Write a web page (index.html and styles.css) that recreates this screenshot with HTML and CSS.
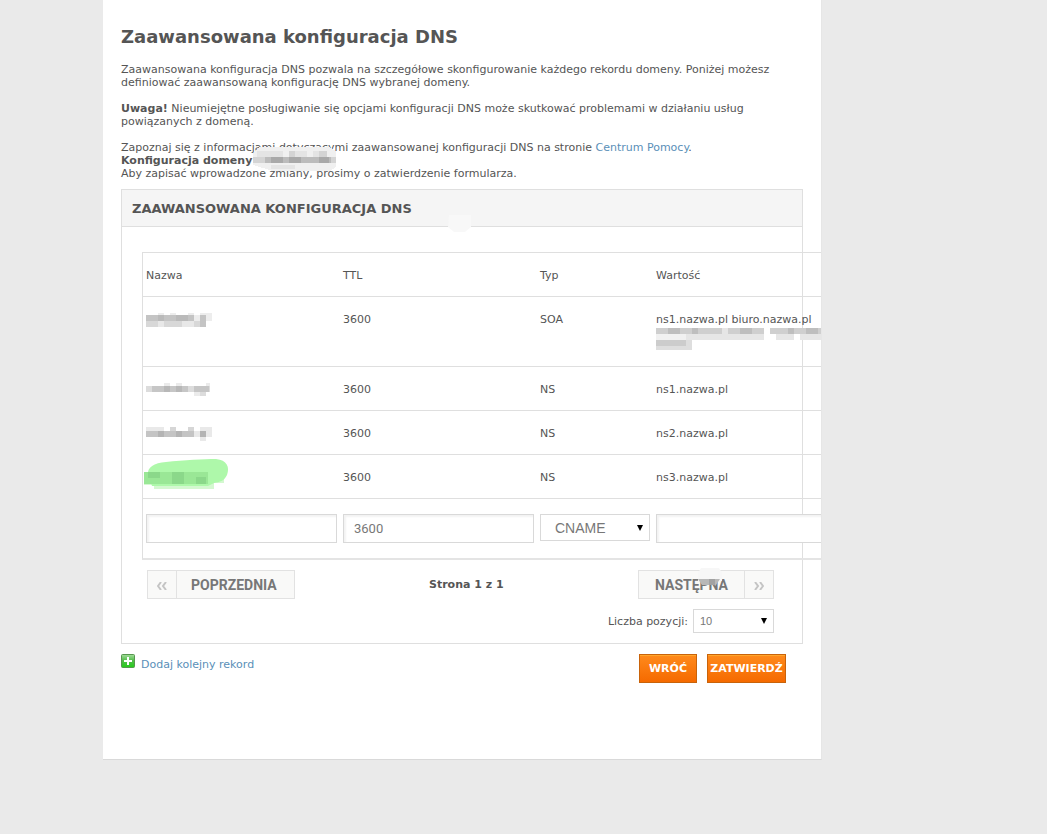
FILE: index.html
```html
<!DOCTYPE html>
<html lang="pl">
<head>
    <meta charset="UTF-8">
    <meta name="viewport" content="width=device-width, initial-scale=1.0">
    <title>Zaawansowana konfiguracja DNS</title>
    <link rel="stylesheet" href="styles.css">
</head>
<body>
    <main class="page">
        <h1>Zaawansowana konfiguracja DNS</h1>

        <p>Zaawansowana konfiguracja DNS pozwala na szczegółowe skonfigurowanie każdego rekordu domeny. Poniżej możesz definiować zaawansowaną konfigurację DNS wybranej domeny.</p>
        <p><strong>Uwaga!</strong> Nieumiejętne posługiwanie się opcjami konfiguracji DNS może skutkować problemami w działaniu usług powiązanych z domeną.</p>
        <p class="last">
            Zapoznaj się z informacjami dotyczącymi zaawansowanej konfiguracji DNS na stronie <a href="#">Centrum Pomocy</a>.<br>
            <strong class="domain">Konfiguracja domeny
                <svg class="mask mask-domain" width="84" height="26" viewBox="0 0 84 26" shape-rendering="crispEdges">
                    <path fill="#f0f0f0" d="M6 0h70l7 4v16l-6 4H20L0 18V6z"/>
                    <path fill="#e4e4e4" d="M4 4h26v6H4zM42 4h12v6H42zM60 4h6v6h-6zM18 18h24v4H18z"/>
                    <path fill="#d4d4d4" d="M36 4h6v6h-6zM66 4h8v6h-8zM0 10h83v6H0z"/>
                    <path fill="#bcbcbc" d="M12 10h66v6H12z"/>
                    <path fill="#a9a9a9" d="M18 10h12v6H18zM36 10h12v6H36zM66 10h10v6H66z"/>
                </svg>
            </strong><br>
            Aby zapisać wprowadzone zmiany, prosimy o zatwierdzenie formularza.
        </p>

        <form>
            <section class="panel">
                <h2>ZAAWANSOWANA KONFIGURACJA DNS
                    <svg class="mask mask-title" width="24" height="17" viewBox="0 0 24 17">
                        <path fill="#f8f8f8" d="M1 0h22v12l-6 5H6l-6-5z"/>
                    </svg>
                </h2>
                <div class="panel-body">
                    <table class="records">
                        <thead>
                            <tr>
                                <th class="col-name">Nazwa</th>
                                <th class="col-ttl">TTL</th>
                                <th class="col-type">Typ</th>
                                <th>Wartość</th>
                            </tr>
                        </thead>
                        <tbody>
                            <tr class="soa">
                                <td>
                                    <svg class="mosaic" width="66" height="14" viewBox="0 0 66 14" shape-rendering="crispEdges">
                                        <path fill="#ededed" d="M12 0h6v2h-6zM24 0h6v2h-6zM42 0h6v2h-6zM54 0h12v8H54zM48 2h6v6h-6z"/>
                                        <path fill="#d8d8d8" d="M0 8h12v6H0zM18 8h30v6H18zM48 8h6v6h-6z"/>
                                        <path fill="#e8e8e8" d="M12 8h6v6h-6zM36 8h12v6H36z"/>
                                        <path fill="#c4c4c4" d="M0 2h48v6H0zM54 2h6v12h-6z"/>
                                        <path fill="#bababa" d="M12 2h6v6h-6zM30 2h12v6H30z"/>
                                    </svg>
                                </td>
                                <td>3600</td>
                                <td>SOA</td>
                                <td>ns1.nazwa.pl biuro.nazwa.pl
                                    <svg class="mosaic" width="174" height="24" viewBox="0 0 174 24" shape-rendering="crispEdges">
                                        <path fill="#cfcfcf" d="M0 2h108v6H0zM114 2h60v6h-60z"/>
                                        <path fill="#bebebe" d="M12 2h12v6H12zM36 2h6v6h-6zM84 2h12v6H84zM132 2h6v6h-6zM150 2h12v6h-12z"/>
                                        <path fill="#e6e6e6" d="M30 8h78v6H30zM120 8h18v6h-18zM144 8h24v6h-24zM66 2h6v6h-6z"/>
                                        <path fill="#f1f1f1" d="M0 8h30v6H0z"/>
                                        <path fill="#cccccc" d="M0 14h30v6H0z"/>
                                        <path fill="#dedede" d="M0 20h30v4H0zM30 14h6v10h-6z"/>
                                    </svg>
                                </td>
                            </tr>
                            <tr>
                                <td>
                                    <svg class="mosaic" width="66" height="14" viewBox="0 0 66 14" shape-rendering="crispEdges">
                                        <path fill="#ebebeb" d="M18 0h6v3h-6zM30 0h6v3h-6zM60 0h4v3h-4zM48 9h6v4h-6z"/>
                                        <path fill="#dcdcdc" d="M0 3h64v6H0zM54 9h6v4h-6z"/>
                                        <path fill="#c6c6c6" d="M6 3h36v6H6zM48 3h15v6H48z"/>
                                        <path fill="#b8b8b8" d="M18 3h6v6h-6zM30 3h6v6h-6z"/>
                                    </svg>
                                </td>
                                <td>3600</td>
                                <td>NS</td>
                                <td>ns1.nazwa.pl</td>
                            </tr>
                            <tr>
                                <td>
                                    <svg class="mosaic" width="66" height="14" viewBox="0 0 66 14" shape-rendering="crispEdges">
                                        <path fill="#e9e9e9" d="M0 0h18v4H0zM54 0h12v10H54zM48 4h6v6h-6zM54 10h6v4h-6z"/>
                                        <path fill="#d6d6d6" d="M24 0h6v4h-6zM42 0h6v4h-6z"/>
                                        <path fill="#c4c4c4" d="M0 4h48v6H0z"/>
                                        <path fill="#b4b4b4" d="M12 4h6v6h-6zM30 4h6v6h-6zM54 4h6v6h-6z"/>
                                    </svg>
                                </td>
                                <td>3600</td>
                                <td>NS</td>
                                <td>ns2.nazwa.pl</td>
                            </tr>
                            <tr>
                                <td>
                                    <svg class="mosaic marked" width="86" height="32" viewBox="0 0 86 32">
                                        <path fill="#d4f8d0" d="M0 14h80v10H70v6H10v-4H0z"/>
                                        <path fill="#aef8aa" d="M4 16C3 8 10 4 22 3C40 1 60 0 72 0C83 1 86 8 83 16C80 22 76 23 70 24L64 27H8z"/>
                                        <path fill="#9ae796" d="M0 13h64v12H0z"/>
                                        <path fill="#8bd88a" d="M28 13h12v12H28zM52 18h10v7H52zM4 13h12v6H4z"/>
                                    </svg>
                                </td>
                                <td>3600</td>
                                <td>NS</td>
                                <td>ns3.nazwa.pl</td>
                            </tr>
                            <tr class="edit">
                                <td><input type="text" aria-label="Nazwa"></td>
                                <td><input type="text" aria-label="TTL" value="3600"></td>
                                <td>
                                    <select class="type" aria-label="Typ">
                                        <option>CNAME</option>
                                        <option>A</option>
                                        <option>MX</option>
                                    </select>
                                </td>
                                <td><input type="text" aria-label="Wartość"></td>
                            </tr>
                        </tbody>
                    </table>

                    <div class="pager">
                        <button type="button" class="page-btn"><span class="arrow">
                            <svg width="10" height="8" viewBox="0 0 10 8"><path d="M4 0L1 4l3 4M9 0L6 4l3 4"/></svg>
                        </span><span class="label">POPRZEDNIA</span></button>
                        <strong>Strona 1 z 1</strong>
                        <button type="button" class="page-btn next"><span class="label">NASTĘPNA</span><span class="arrow">
                            <svg width="10" height="8" viewBox="0 0 10 8"><path d="M1 0l3 4-3 4M6 0l3 4-3 4"/></svg>
                        </span>
                            <svg class="mask mask-next" width="24" height="18" viewBox="0 0 24 18">
                                <path fill="#f7f7f7" d="M3 0h18l3 5v8H0V5z"/>
                                <path fill="#b8b8b8" d="M0 11h22l-4 6H4z"/>
                                <path fill="#a2a2a2" d="M11 11h6v6h-6z"/>
                            </svg>
                        </button>
                    </div>
                    <div class="per-page">
                        <label for="per-page">Liczba pozycji:</label>
                        <select id="per-page">
                            <option>10</option>
                            <option>20</option>
                            <option>50</option>
                        </select>
                    </div>
                </div>
            </section>

            <div class="actions">
                <a class="add" href="#">
                    <svg width="14" height="14" viewBox="0 0 14 14">
                        <defs>
                            <linearGradient id="green" x1="0" y1="0" x2="0" y2="1">
                                <stop offset="0" stop-color="#a3dd9c"/>
                                <stop offset="0.45" stop-color="#55bd4c"/>
                                <stop offset="1" stop-color="#22cd18"/>
                            </linearGradient>
                        </defs>
                        <rect x="0.5" y="0.5" width="13" height="13" rx="1" fill="url(#green)" stroke="#57964f"/>
                        <path d="M7 3v8M3 7h8" stroke="#fff" stroke-width="2"/>
                    </svg>
                    <span>Dodaj kolejny rekord</span>
                </a>
                <button type="button" class="btn">WRÓĆ</button>
                <button type="submit" class="btn confirm">ZATWIERDŹ</button>
            </div>
        </form>
    </main>
</body>
</html>
```
FILE: styles.css
```css
* {
    box-sizing: border-box;
}
body {
    margin: 0;
    background: #eaeaea;
    color: #555;
    font: 11px/13px Verdana, "DejaVu Sans", sans-serif;
}
.page {
    max-width: 719px;
    margin: 0 103px;
    padding: 26px 18px 76px;
    background: #fff;
    border-right: 1px solid #e6e6e6;
    border-bottom: 1px solid #d9d9d9;
    box-shadow: 0 3px 0 #f2f2f2;
    overflow: hidden;
}
h1 {
    margin: 0 0 15px;
    font-size: 18px;
    line-height: 22px;
}
p {
    margin: 0 0 13px;
}
p.last {
    margin-bottom: 9px;
}
a {
    color: #5a8fb8;
    text-decoration: none;
}

/* hidden domain names */
.domain {
    position: relative;
}
.mask {
    position: absolute;
}
.mask-domain {
    left: 132px;
    top: -7px;
}
.mask-title {
    left: 326px;
    top: 25px;
}
.mosaic {
    display: block;
}

.panel {
    border: 1px solid #dfdfdf;
}
.panel h2 {
    position: relative;
    margin: 0;
    padding: 11px 10px 9px;
    background: #f5f5f5;
    border-bottom: 1px solid #dfdfdf;
    font-size: 13px;
    line-height: 16px;
}
.panel-body {
    padding: 25px 28px 10px 20px;
}

.records {
    width: 714px;
    table-layout: fixed;
    border-collapse: separate;
    border-spacing: 0;
    border: 1px solid #dfdfdf;
    border-bottom: 2px solid #e4e4e4;
}
.col-name,
.col-ttl {
    width: 197px;
}
.col-type {
    width: 116px;
}
.records th,
.records td {
    height: 44px;
    padding: 16px 3px 0;
    border-bottom: 1px solid #dfdfdf;
    font-weight: normal;
    text-align: left;
    vertical-align: top;
}
.records .soa td {
    height: 70px;
}
.records .edit td {
    height: 59px;
    padding-top: 15px;
    border-bottom: 0;
}
.marked {
    margin: -12px 0 -8px -2px;
}

input,
select {
    background: #fff;
    border: 1px solid #d9d9d9;
    border-radius: 0;
    color: #777;
}
.edit input {
    display: block;
    width: 191px;
    height: 29px;
    padding: 0 10px;
    box-shadow: inset 2px 2px 2px #f3f3f3;
    font: 13px Roboto, sans-serif;
}
select {
    appearance: none;
    background: #fff url("data:image/svg+xml,%3Csvg xmlns='http://www.w3.org/2000/svg' width='6' height='6'%3E%3Cpath d='M0 0h6L3 6z'/%3E%3C/svg%3E") no-repeat right 6px center;
    font-family: "Liberation Sans", Arial, sans-serif;
}
.type {
    display: block;
    width: 110px;
    height: 27px;
    padding: 0 14px;
    font-size: 14px;
}

.pager {
    display: flex;
    justify-content: space-between;
    margin: 10px 0 10px 5px;
}
.pager strong {
    padding-top: 8px;
}
.page-btn {
    position: relative;
    display: flex;
    height: 29px;
    padding: 0;
    background: #f9f9f8;
    border: 1px solid #e2e2e2;
    color: #777;
    font: bold 14px/28px "DIN", Roboto, sans-serif;
}
.page-btn .label {
    padding: 0 17px 0 14px;
}
.page-btn .arrow {
    width: 29px;
    border-right: 1px solid #e2e2e2;
}
.page-btn.next .label {
    padding: 0 16px;
}
.page-btn.next .arrow {
    border-right: 0;
    border-left: 1px solid #e2e2e2;
}
.arrow path {
    fill: none;
    stroke: #c4c4c4;
    stroke-width: 2;
}
.mask-next {
    left: 59px;
    top: -3px;
}

.per-page {
    display: flex;
    justify-content: flex-end;
    align-items: center;
    gap: 5px;
}
.per-page select {
    width: 81px;
    height: 24px;
    padding: 0 6px;
    font-size: 11px;
}

.actions {
    display: flex;
    gap: 10px;
    padding: 10px 17px 0 0;
}
.add {
    display: flex;
    gap: 6px;
    margin-right: auto;
}
.add span {
    padding-top: 4px;
}
.btn {
    width: 58px;
    height: 29px;
    padding: 0;
    background: linear-gradient(#ff8a1c, #f56a00);
    border: 1px solid #c9630a;
    box-shadow: inset 0 1px 0 #ffa62b;
    color: #fff;
    font: bold 11px Verdana, "DejaVu Sans", sans-serif;
}
.btn.confirm {
    width: 79px;
}
```
